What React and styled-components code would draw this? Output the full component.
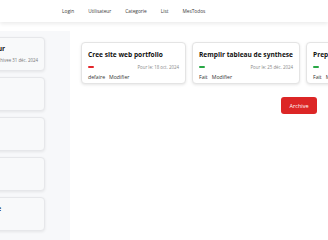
import React from "react"
import styled, { createGlobalStyle } from "styled-components"

const GlobalStyle = createGlobalStyle`
  html, body {
    margin: 0;
    padding: 0;
    background: #ffffff;
    font-family: "Open Sans", "Liberation Sans", sans-serif;
    color: #212529;
  }
  * { box-sizing: border-box; }
`

const sidebarTodos = [
  { title: "Appeler le fournisseur", date: "Archivee 31 déc. 2024" },
  { title: "Lire" },
  { title: "Courses" },
  { title: "Sport" },
  { title: "Rappeler le garagiste" },
]

const todos = [
  { title: "Cree site web portfolio", date: "Pour le: 18 oct. 2024", done: false },
  { title: "Remplir tableau de synthese", date: "Pour le: 25 déc. 2024", done: true },
  { title: "Preparer la reunion", date: "Pour le: 02 janv. 2025", done: true },
]

export default function App() {
  return (
    <>
      <GlobalStyle />
      <Navbar>
        <NavLink>Login</NavLink>
        <NavLink>Utilisateur</NavLink>
        <NavLink>Categorie</NavLink>
        <NavLink>List</NavLink>
        <NavLink>MesTodos</NavLink>
      </Navbar>
      <Layout>
        <Sidebar>
          <SideList>
            {sidebarTodos.map((t, i) => (
              <SideCard key={i}>
                <SideTitle>{t.title}</SideTitle>
                {t.date && <SideDate>{t.date}</SideDate>}
              </SideCard>
            ))}
          </SideList>
        </Sidebar>
        <Main>
          <CardRow>
            {todos.map((t, i) => (
              <Card key={i}>
                <CardTitle>{t.title}</CardTitle>
                <Meta>
                  <Status $done={t.done} />
                  <DueDate>{t.date}</DueDate>
                </Meta>
                <Actions>
                  <Action>{t.done ? "Fait" : "defaire"}</Action>
                  <Action>Modifier</Action>
                </Actions>
              </Card>
            ))}
          </CardRow>
          <ButtonRow>
            <ArchiveButton>Archive</ArchiveButton>
          </ButtonRow>
        </Main>
      </Layout>
    </>
  )
}

const Navbar = styled.nav`
  height: 22px;
  display: flex;
  align-items: center;
  gap: 14px;
  padding-left: 62px;
  background: #ffffff;
  box-shadow: 0 2px 4px rgba(0, 0, 0, 0.08);
`

const NavLink = styled.a`
  font-size: 4.8px;
  color: #3a3a3a;
  line-height: 1;
`

const Layout = styled.div`
  display: grid;
  grid-template-columns: 70px 1fr;
  margin-top: 9px;
  min-height: calc(100vh - 31px);
`

const Sidebar = styled.aside`
  background: #f7f8fa;
  overflow: hidden;
  padding-top: 6px;
`

const SideList = styled.div`
  width: 120px;
  margin-left: -75px;
  display: flex;
  flex-direction: column;
  gap: 6px;
`

const SideCard = styled.div`
  height: 34px;
  padding: 6px 6px;
  background: #f8f9fa;
  border: 1px solid #e6e7ea;
  border-radius: 4px;
  box-shadow: 0 1px 3px rgba(0, 0, 0, 0.08);
  display: flex;
  flex-direction: column;
  gap: 4px;
`

const SideTitle = styled.div`
  font-size: 6.6px;
  font-weight: 700;
  color: #111;
  white-space: nowrap;
`

const SideDate = styled.div`
  font-size: 4.4px;
  color: #777;
  text-align: right;
  white-space: nowrap;
`

const Main = styled.main`
  padding: 11px 11px 0 11px;
  overflow: hidden;
  display: flex;
  flex-direction: column;
  gap: 13px;
`

const CardRow = styled.div`
  display: flex;
  gap: 6px;
`

const Card = styled.div`
  flex: 0 0 105px;
  height: 42px;
  padding: 7px 6px 6px;
  background: #ffffff;
  border: 1px solid #e4e4e4;
  border-radius: 4px;
  box-shadow: 0 1px 3px rgba(0, 0, 0, 0.1);
  display: flex;
  flex-direction: column;
`

const CardTitle = styled.div`
  font-size: 6.6px;
  font-weight: 700;
  color: #111;
  white-space: nowrap;
`

const Meta = styled.div`
  margin-top: 5px;
  display: flex;
  align-items: center;
  justify-content: space-between;
`

const Status = styled.span`
  width: 6px;
  height: 2.5px;
  border-radius: 1px;
  background: ${(p) => (p.$done ? "#28a745" : "#e3262b")};
`

const DueDate = styled.span`
  font-size: 4.4px;
  color: #888;
  white-space: nowrap;
`

const Actions = styled.div`
  margin-top: 3px;
  display: flex;
  gap: 4px;
`

const Action = styled.span`
  font-size: 5.2px;
  color: #333;
  white-space: nowrap;
`

const ButtonRow = styled.div`
  display: flex;
  justify-content: flex-end;
`

const ArchiveButton = styled.button`
  width: 36px;
  height: 17px;
  border: none;
  border-radius: 3px;
  background: #dc2626;
  color: #ffffff;
  font-family: inherit;
  font-size: 5.5px;
  padding: 0;
`
